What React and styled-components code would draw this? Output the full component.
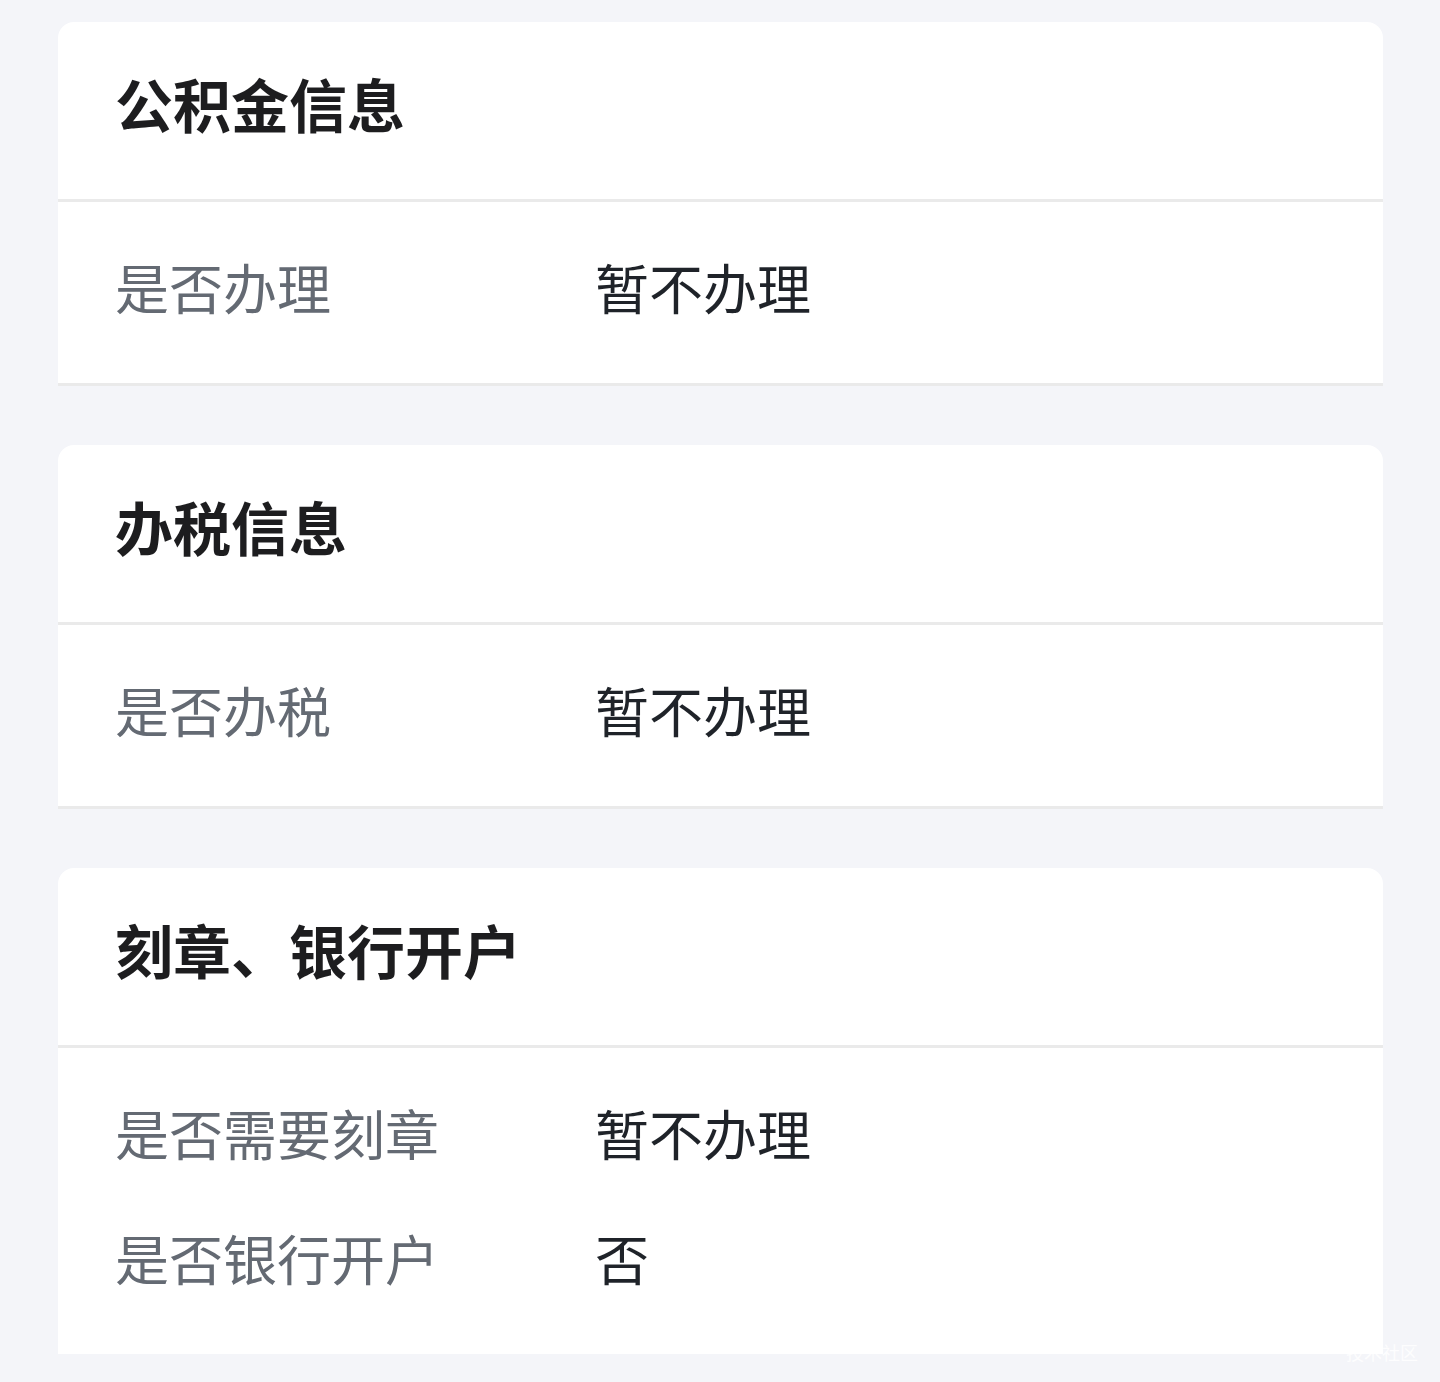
import React from "react";
import styled, { createGlobalStyle } from "styled-components";

const Global = createGlobalStyle`
  html, body { margin: 0; padding: 0; background: #f4f5f9; }
  body { font-family: "Noto Sans CJK SC", "Noto Sans", sans-serif; }
  * { box-sizing: border-box; }
`;

const Page = styled.div`
  position: relative;
  min-height: 1382px;
  background: #f4f5f9;
  padding: 22px 57px 29px 58px;
  display: flex;
  flex-direction: column;
  gap: 59px;
`;

const Card = styled.section`
  background: #ffffff;
  border-radius: 16px 16px 0 0;
  overflow: hidden;
`;

const Header = styled.div`
  height: 180px;
  display: flex;
  align-items: center;
  padding-left: 57px;
  border-bottom: 3px solid #eaeaea;
`;

const Title = styled.h2`
  margin: 0;
  font-size: 58px;
  font-weight: 700;
  color: #1d1d1f;
  line-height: 1;
  transform: translateY(-8px);
`;

const Body = styled.div`
  padding: 47px 57px 58px;
  display: flex;
  flex-direction: column;
  gap: 49px;
  border-bottom: ${(p) => (p.$bordered ? "3px solid #eaeaea" : "none")};
`;

const Row = styled.div`
  display: grid;
  grid-template-columns: 480px 1fr;
  line-height: 76px;
  font-size: 54px;
`;

const Label = styled.span`
  color: #646a73;
`;

const Value = styled.span`
  color: #1f2329;
`;

const Watermark = styled.div`
  position: absolute;
  right: 22px;
  bottom: 22px;
  font-size: 18px;
  line-height: 18px;
  color: rgba(255, 255, 255, 0.85);
  pointer-events: none;
`;

const sections = [
  { title: "公积金信息", rows: [["是否办理", "暂不办理"]], bordered: true },
  { title: "办税信息", rows: [["是否办税", "暂不办理"]], bordered: true },
  {
    title: "刻章、银行开户",
    rows: [
      ["是否需要刻章", "暂不办理"],
      ["是否银行开户", "否"],
    ],
    bordered: false,
  },
];

export default function App() {
  return (
    <>
      <Global />
      <Page>
        {sections.map((s) => (
          <Card key={s.title}>
            <Header>
              <Title>{s.title}</Title>
            </Header>
            <Body $bordered={s.bordered}>
              {s.rows.map(([l, v]) => (
                <Row key={l}>
                  <Label>{l}</Label>
                  <Value>{v}</Value>
                </Row>
              ))}
            </Body>
          </Card>
        ))}
        <Watermark>技术社区</Watermark>
      </Page>
    </>
  );
}
